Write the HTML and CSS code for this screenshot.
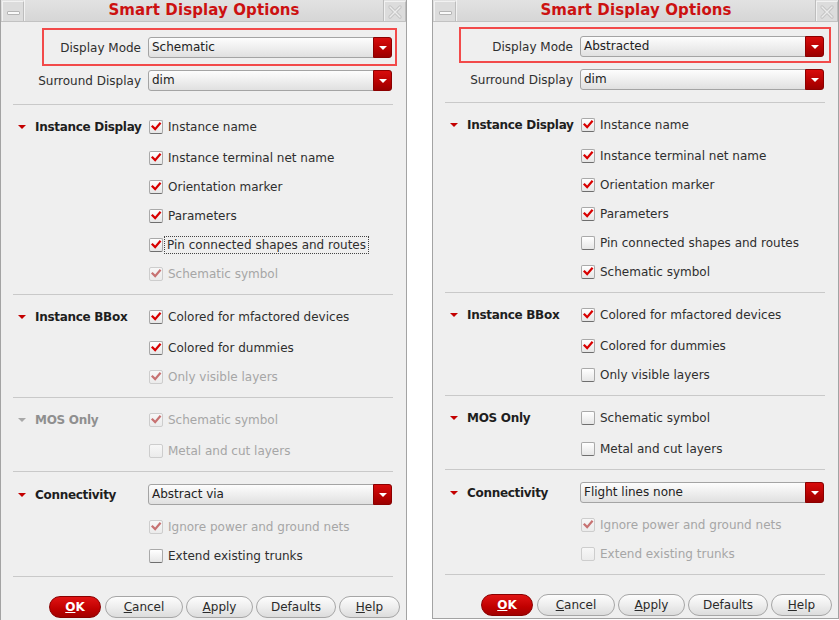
FILE: index.html
```html
<!DOCTYPE html>
<html lang="en">
<head>
  <meta charset="UTF-8">
  <meta name="viewport" content="width=device-width, initial-scale=1.0">
  <title>Smart Display Options</title>
  <link rel="stylesheet" href="styles.css">
</head>
<body>
  <svg class="defs" width="0" height="0">
    <symbol id="tick" viewBox="0 0 14 14">
      <path d="M3 6.5 L6 9.5 L11.5 3" fill="none" stroke="currentColor" stroke-width="2.6" stroke-linecap="square" stroke-linejoin="miter"/>
    </symbol>
    <symbol id="cross" viewBox="0 0 16 16">
      <path d="M3 3 L13 13 M13 3 L3 13" fill="none" stroke="#c4c4c4" stroke-width="3.2" stroke-linecap="round"/>
      <path d="M3 3 L13 13 M13 3 L3 13" fill="none" stroke="#ececec" stroke-width="1.4" stroke-linecap="round"/>
    </symbol>
  </svg>

  <div class="screen">
    <!-- dialog 1 : schematic mode -->
    <div class="dialog dialog--left">
      <div class="titlebar">
        <div class="tb-btn"><span class="tb-min"></span></div>
        <div class="tb-title">Smart Display Options</div>
        <div class="tb-btn"><svg class="tb-x"><use href="#cross"/></svg></div>
      </div>
      <div class="body">
        <div class="highlight">
          <div class="row">
            <span class="lbl">Display Mode</span>
            <div class="combo">Schematic<span class="arrow"></span></div>
          </div>
        </div>
        <div class="row row--surround">
          <span class="lbl">Surround Display</span>
          <div class="combo">dim<span class="arrow"></span></div>
        </div>

        <div class="section">
          <div class="row row--first">
            <span class="head"><span class="tri"></span>Instance Display</span>
            <label class="check on"><span class="box"><svg><use href="#tick"/></svg></span>Instance name</label>
          </div>
          <div class="row"><span></span><label class="check on"><span class="box"><svg><use href="#tick"/></svg></span>Instance terminal net name</label></div>
          <div class="row"><span></span><label class="check on"><span class="box"><svg><use href="#tick"/></svg></span>Orientation marker</label></div>
          <div class="row"><span></span><label class="check on"><span class="box"><svg><use href="#tick"/></svg></span>Parameters</label></div>
          <div class="row"><span></span><label class="check on focus"><span class="box"><svg><use href="#tick"/></svg></span><span class="txt">Pin connected shapes and routes</span></label></div>
          <div class="row"><span></span><label class="check on off"><span class="box"><svg><use href="#tick"/></svg></span>Schematic symbol</label></div>
        </div>

        <div class="section">
          <div class="row row--first">
            <span class="head"><span class="tri"></span>Instance BBox</span>
            <label class="check on"><span class="box"><svg><use href="#tick"/></svg></span>Colored for mfactored devices</label>
          </div>
          <div class="row"><span></span><label class="check on"><span class="box"><svg><use href="#tick"/></svg></span>Colored for dummies</label></div>
          <div class="row"><span></span><label class="check on off"><span class="box"><svg><use href="#tick"/></svg></span>Only visible layers</label></div>
        </div>

        <div class="section">
          <div class="row row--first">
            <span class="head head--off"><span class="tri"></span>MOS Only</span>
            <label class="check on off"><span class="box"><svg><use href="#tick"/></svg></span>Schematic symbol</label>
          </div>
          <div class="row"><span></span><label class="check off"><span class="box"></span>Metal and cut layers</label></div>
        </div>

        <div class="section section--last">
          <div class="row row--first row--tall">
            <span class="head"><span class="tri"></span>Connectivity</span>
            <div class="combo">Abstract via<span class="arrow"></span></div>
          </div>
          <div class="row"><span></span><label class="check on off"><span class="box"><svg><use href="#tick"/></svg></span>Ignore power and ground nets</label></div>
          <div class="row"><span></span><label class="check"><span class="box"></span>Extend existing trunks</label></div>
        </div>

        <div class="buttons">
          <button class="btn btn--ok"><u>O</u>K</button>
          <button class="btn btn--cancel"><u>C</u>ancel</button>
          <button class="btn btn--apply"><u>A</u>pply</button>
          <button class="btn btn--defaults">Defaults</button>
          <button class="btn btn--help"><u>H</u>elp</button>
        </div>
      </div>
    </div>

    <!-- dialog 2 : abstracted mode -->
    <div class="dialog dialog--right">
      <div class="titlebar">
        <div class="tb-btn"><span class="tb-min"></span></div>
        <div class="tb-title">Smart Display Options</div>
        <div class="tb-btn"><svg class="tb-x"><use href="#cross"/></svg></div>
      </div>
      <div class="body">
        <div class="highlight">
          <div class="row">
            <span class="lbl">Display Mode</span>
            <div class="combo">Abstracted<span class="arrow"></span></div>
          </div>
        </div>
        <div class="row row--surround">
          <span class="lbl">Surround Display</span>
          <div class="combo">dim<span class="arrow"></span></div>
        </div>

        <div class="section">
          <div class="row row--first">
            <span class="head"><span class="tri"></span>Instance Display</span>
            <label class="check on"><span class="box"><svg><use href="#tick"/></svg></span>Instance name</label>
          </div>
          <div class="row"><span></span><label class="check on"><span class="box"><svg><use href="#tick"/></svg></span>Instance terminal net name</label></div>
          <div class="row"><span></span><label class="check on"><span class="box"><svg><use href="#tick"/></svg></span>Orientation marker</label></div>
          <div class="row"><span></span><label class="check on"><span class="box"><svg><use href="#tick"/></svg></span>Parameters</label></div>
          <div class="row"><span></span><label class="check"><span class="box"></span>Pin connected shapes and routes</label></div>
          <div class="row"><span></span><label class="check on"><span class="box"><svg><use href="#tick"/></svg></span>Schematic symbol</label></div>
        </div>

        <div class="section">
          <div class="row row--first">
            <span class="head"><span class="tri"></span>Instance BBox</span>
            <label class="check on"><span class="box"><svg><use href="#tick"/></svg></span>Colored for mfactored devices</label>
          </div>
          <div class="row"><span></span><label class="check on"><span class="box"><svg><use href="#tick"/></svg></span>Colored for dummies</label></div>
          <div class="row"><span></span><label class="check"><span class="box"></span>Only visible layers</label></div>
        </div>

        <div class="section">
          <div class="row row--first">
            <span class="head"><span class="tri"></span>MOS Only</span>
            <label class="check"><span class="box"></span>Schematic symbol</label>
          </div>
          <div class="row"><span></span><label class="check"><span class="box"></span>Metal and cut layers</label></div>
        </div>

        <div class="section section--last">
          <div class="row row--first row--tall">
            <span class="head"><span class="tri"></span>Connectivity</span>
            <div class="combo">Flight lines none<span class="arrow"></span></div>
          </div>
          <div class="row"><span></span><label class="check on off"><span class="box"><svg><use href="#tick"/></svg></span>Ignore power and ground nets</label></div>
          <div class="row"><span></span><label class="check off"><span class="box"></span>Extend existing trunks</label></div>
        </div>

        <div class="buttons">
          <button class="btn btn--ok"><u>O</u>K</button>
          <button class="btn btn--cancel"><u>C</u>ancel</button>
          <button class="btn btn--apply"><u>A</u>pply</button>
          <button class="btn btn--defaults">Defaults</button>
          <button class="btn btn--help"><u>H</u>elp</button>
        </div>
      </div>
    </div>
  </div>
</body>
</html>
```

FILE: styles.css
```css
* {
  margin: 0;
  padding: 0;
  box-sizing: border-box;
}

body {
  font-family: "DejaVu Sans", Verdana, sans-serif;
  font-size: 12px;
  color: #2e2e2e;
  background-color: #fff;
  overflow: hidden;
}

.defs {
  position: absolute;
}

.screen {
  display: flex;
  gap: 25px;
  width: 839px;
  height: 620px;
  align-items: flex-start;
}

/* dialog window */
.dialog {
  width: 407px;
  background-color: #efefef;
  border: 1px solid #a3a3a3;
  border-top: none;
}

.dialog--left {
  height: 624px;
}

.dialog--right {
  height: 619px;
}

.titlebar {
  display: flex;
  height: 22px;
  background: linear-gradient(#e2e2e2, #d6d6d6);
  border-bottom: 1px solid #c2c2c2;
}

.tb-btn {
  width: 22px;
  margin-top: 1px;
  display: flex;
  align-items: center;
  justify-content: center;
  border: 1px solid #f2f2f2;
  border-right-color: #bdbdbd;
  border-bottom: none;
  background-color: #dcdcdc;
}

.tb-btn:first-child {
  margin-left: 1px;
}

.tb-min {
  display: block;
  width: 13px;
  height: 4px;
  margin-top: 3px;
  background: #fafafa;
  border: 1px solid #b4b4b4;
  border-radius: 1px;
}

.tb-x {
  width: 16px;
  height: 16px;
}

.tb-title {
  flex: 1;
  text-align: center;
  font-size: 15px;
  font-weight: bold;
  letter-spacing: 0.1px;
  color: #cc1111;
  line-height: 21px;
  border-left: 1px solid #f2f2f2;
  border-right: 1px solid #bdbdbd;
}

/* rows */
.body {
  padding-top: 6px;
}

.row {
  display: grid;
  grid-template-columns: 140px 1fr;
  column-gap: 7px;
  align-items: center;
  height: 29px;
  padding-right: 14px;
}

.lbl {
  text-align: right;
  white-space: nowrap;
}

.highlight {
  border: 2px solid #f24a4a;
  margin: 0 9px 4px 41px;
  padding: 7px 3px 6px 0;
}

.highlight .row {
  grid-template-columns: 97px 1fr;
  height: 21px;
  padding-right: 0;
}

.dialog--right .body {
  padding-top: 5px;
}

.dialog--right .highlight {
  margin: 0 7px 6px 26px;
  padding: 7px 5px 4px 0;
}

.dialog--right .highlight .row {
  grid-template-columns: 112px 1fr;
}

.row--surround {
  height: 21px;
  margin-bottom: 13px;
}

.dialog--right .row--surround {
  margin-bottom: 12px;
}

.combo {
  position: relative;
  height: 21px;
  line-height: 19px;
  padding-left: 3px;
  border: 1px solid #a4a4a4;
  border-radius: 3px;
  background: linear-gradient(#fdfdfd, #ececec 60%, #e0e0e0);
  color: #222;
}

.arrow {
  position: absolute;
  top: -1px;
  right: -1px;
  width: 19px;
  height: 21px;
  border-radius: 0 3px 3px 0;
  background: linear-gradient(#d80c0c, #b00000 70%, #9a0000);
  border: 1px solid #8c0000;
}

.arrow::after {
  content: "";
  position: absolute;
  left: 5px;
  top: 8px;
  border-left: 4px solid transparent;
  border-right: 4px solid transparent;
  border-top: 4px solid #fff;
}

/* sections */
.section {
  border-top: 1px solid #c9c9c9;
  margin: 0 13px 0 12px;
  padding: 7px 0 6px;
}

.section--last {
  border-bottom: 1px solid #c9c9c9;
}

.section .row {
  margin-left: -12px;
  margin-right: -13px;
}

.row--first {
  margin-bottom: 2px;
}

.row--tall {
  height: 31px;
}

.head {
  display: flex;
  align-items: center;
  padding-left: 17px;
  font-weight: bold;
  letter-spacing: -0.3px;
  white-space: nowrap;
  color: #1e1e1e;
}

.tri {
  width: 0;
  height: 0;
  margin-right: 9px;
  border-left: 4px solid transparent;
  border-right: 4px solid transparent;
  border-top: 4px solid #c40000;
}

.head--off {
  color: #8f8f8f;
}

.head--off .tri {
  border-top-color: #a8a8a8;
}

/* checkboxes */
.check {
  display: flex;
  align-items: center;
  white-space: nowrap;
}

.box {
  width: 14px;
  height: 14px;
  margin: 0 5px 0 1px;
  border: 1px solid #a9a9a9;
  border-bottom-color: #6e6e6e;
  border-radius: 2px;
  background: linear-gradient(#ffffff, #e6e6e6);
  color: #d80000;
  display: flex;
}

.box svg {
  width: 12px;
  height: 12px;
}

.check.off {
  color: #a6a6a6;
}

.check.off .box {
  border-color: #cdcdcd;
  background: linear-gradient(#f7f7f7, #ebebeb);
  color: #c77272;
}

.focus .txt {
  outline: 1px dotted #444;
  outline-offset: 1px;
  padding: 0 1px;
  margin-left: -2px;
}

/* buttons */
.buttons {
  padding: 19px 6px 0 0;
  display: flex;
  gap: 3px;
  justify-content: flex-end;
}

.btn {
  font-family: "DejaVu Sans", Verdana, sans-serif;
  font-size: 12px;
  height: 22px;
  border: 1px solid #a6a6a6;
  border-radius: 11px;
  background: linear-gradient(#fdfdfd, #ececec 55%, #dcdcdc);
  color: #2a2a2a;
}

.btn--ok {
  width: 52px;
  margin-right: 1px;
  background: linear-gradient(#e01414, #c00000 60%, #a20000);
  border-color: #8a0000;
  color: #fff;
  font-weight: bold;
}

.btn--cancel {
  width: 78px;
}

.btn--apply {
  width: 67px;
}

.btn--defaults {
  width: 80px;
}

.btn--help {
  width: 61px;
}
```
